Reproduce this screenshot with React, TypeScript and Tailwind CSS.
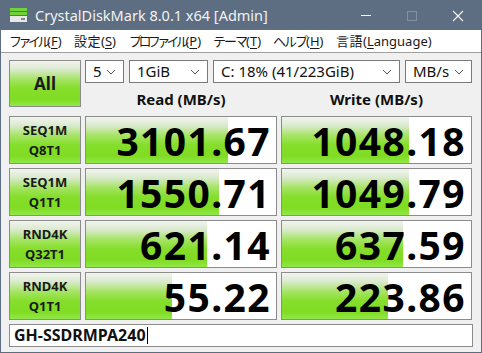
import React from 'react';

interface Result {
  label: [string, string];
  read: string;
  write: string;
  readPct: number;
  writePct: number;
}

const results: Result[] = [
  { label: ['SEQ1M', 'Q8T1'], read: '3101.67', write: '1048.18', readPct: 74.5, writePct: 67 },
  { label: ['SEQ1M', 'Q1T1'], read: '1550.71', write: '1049.79', readPct: 70, writePct: 67 },
  { label: ['RND4K', 'Q32T1'], read: '621.14', write: '637.59', readPct: 63.5, writePct: 64 },
  { label: ['RND4K', 'Q1T1'], read: '55.22', write: '223.86', readPct: 45.5, writePct: 56 },
];

// widths follow the menu item starts in the original window (Meiryo UI kana are narrow)
const menus = [
  { jp: 'ファイル', key: 'F', w: 'w-[65px]', tr: 'tracking-[-3.5px]' },
  { jp: '設定', key: 'S', w: 'w-[55px]', tr: 'tracking-[0.5px]' },
  { jp: 'プロファイル', key: 'P', w: 'w-[84px]', tr: 'tracking-[-3.6px]' },
  { jp: 'テーマ', key: 'T', w: 'w-[60px]', tr: 'tracking-[-2px]' },
  { jp: 'ヘルプ', key: 'H', w: 'w-[63px]', tr: 'tracking-[-2px]' },
  { jp: '言語', key: 'L', rest: 'anguage', w: 'w-[100px]', tr: 'tracking-[0.5px]' },
];

const green =
  'bg-[linear-gradient(to_bottom,#f2f4ef_0%,#dbead0_18%,#a6e466_40%,#86de2c_60%,#7fdc22_85%,#92e84a_100%)]';

const Chevron: React.FC = () => (
  <svg width="10" height="6" viewBox="0 0 10 6" className="shrink-0">
    <polyline points="1,1 5,5 9,1" fill="none" stroke="#555" strokeWidth="1" />
  </svg>
);

const Select: React.FC<{ value: string; className: string }> = ({ value, className }) => (
  <div className={`flex h-[23px] items-center justify-between border border-[#7a7a7a] bg-white pl-[7px] pr-[7px] text-[15px] text-[#111] ${className}`}>
    <span className="leading-none">{value}</span>
    <Chevron />
  </div>
);

const LabelButton: React.FC<{ children: React.ReactNode; className?: string }> = ({ children, className = '' }) => (
  <div className={`flex w-[72px] flex-col items-center justify-center border border-[#8c8c8c] font-bold text-[#1a1a1a] ${green} ${className}`}>
    {children}
  </div>
);

const Meter: React.FC<{ value: string; pct: number; className: string }> = ({ value, pct, className }) => (
  <div className={`relative flex h-[48px] items-center justify-end border border-[#8c8c8c] bg-white pr-[5px] ${className}`}>
    <div className={`absolute inset-y-0 left-0 ${green}`} style={{ width: `${pct}%` }} />
    <span className="relative whitespace-nowrap pt-[2px] text-[39px] font-bold leading-none tracking-[1.4px] text-black">
      {value}
    </span>
  </div>
);

const App: React.FC = () => {
  return (
    <div
      className="flex h-[353px] w-[482px] flex-col overflow-hidden border border-[#5d6d82] bg-[#f0f0f0]"
      style={{ fontFamily: '"Noto Sans", "Noto Sans CJK JP", sans-serif' }}
    >
      {/* title bar */}
      <div className="flex h-[29px] shrink-0 items-center bg-[#5d6d82] text-[14.5px] text-[#f2f2f2]">
        <svg width="17" height="15" viewBox="0 0 17 15" className="ml-[9px] mr-[8px]">
          <rect x="0" y="0" width="17" height="3" fill="#6fd23a" />
          <rect x="0" y="4" width="17" height="3" fill="#6fd23a" />
          <rect x="0" y="8" width="17" height="6" fill="#e8e8e8" />
          <rect x="11" y="10" width="4" height="2" fill="#8a8a8a" />
        </svg>
        <span className="leading-none">CrystalDiskMark 8.0.1 x64 [Admin]</span>
        <div className="ml-auto flex items-center">
          <div className="flex w-[46px] justify-center">
            <div className="h-px w-[10px] bg-[#f2f2f2]" />
          </div>
          <div className="flex w-[46px] justify-center">
            <div className="h-[10px] w-[10px] border border-[#8391a3]" />
          </div>
          <div className="flex w-[46px] justify-center">
            <svg width="12" height="12" viewBox="0 0 12 12">
              <path d="M1 1L11 11M11 1L1 11" stroke="#f2f2f2" strokeWidth="1.2" />
            </svg>
          </div>
        </div>
      </div>

      {/* menu bar */}
      <div className="flex h-[22px] shrink-0 items-center bg-white pl-[8px] text-[13px] text-[#1a1a1a]">
        {menus.map(m => (
          <span key={m.key} className={`shrink-0 whitespace-nowrap leading-none ${m.w}`}>
            <span className={m.tr}>{m.jp}</span>
            (<span className="underline underline-offset-2">{m.key}</span>
            {m.rest})
          </span>
        ))}
      </div>

      {/* content */}
      <div className="flex flex-1 flex-col gap-[4px] border-t border-[#a0a0a0] px-[8px] pt-[7px]">
        <div className="mb-[1px] flex gap-[4px]">
          <LabelButton className="h-[47px] text-[17px]">All</LabelButton>
          <div className="flex flex-col">
            <div className="flex gap-[5px]">
              <Select value="5" className="w-[39px]" />
              <Select value="1GiB" className="w-[79px]" />
              <Select value="C: 18% (41/223GiB)" className="w-[187px]" />
              <Select value="MB/s" className="w-[67px]" />
            </div>
            <div className="flex flex-1 items-center text-[15px] font-bold text-[#111]">
              <div className="w-[192px] pt-[5px] text-center">Read (MB/s)</div>
              <div className="ml-[4px] w-[191px] pt-[5px] text-center">Write (MB/s)</div>
            </div>
          </div>
        </div>

        {results.map(r => (
          <div key={r.label.join()} className="flex gap-[4px]">
            <LabelButton className="h-[48px] text-[13px] leading-[20px]">
              <span>{r.label[0]}</span>
              <span>{r.label[1]}</span>
            </LabelButton>
            <Meter value={r.read} pct={r.readPct} className="w-[192px]" />
            <Meter value={r.write} pct={r.writePct} className="w-[191px]" />
          </div>
        ))}

        <div className="flex h-[23px] items-center border border-[#8c8c8c] bg-white pl-[4px] text-[16px] font-bold text-[#111]">
          <span className="leading-none">GH-SSDRMPA240</span>
          <span className="ml-[1px] h-[17px] w-px bg-black" />
        </div>
      </div>
    </div>
  );
};

export default App;
